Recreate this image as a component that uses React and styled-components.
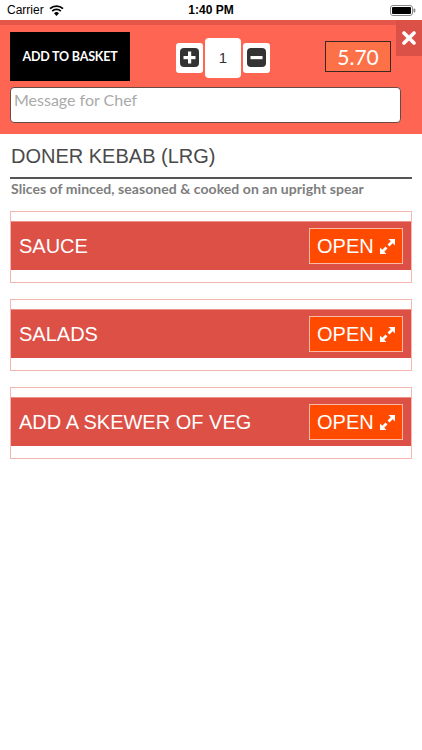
import React, { useState } from "react";
import styled, { createGlobalStyle } from "styled-components";

const GlobalStyle = createGlobalStyle`
  html, body {
    margin: 0;
    padding: 0;
    background: #ffffff;
  }
  * {
    box-sizing: border-box;
  }
`;

const Page = styled.div`
  width: 422px;
  min-height: 750px;
  background: #ffffff;
  font-family: "Liberation Sans", Arial, sans-serif;
`;

const StatusBar = styled.div`
  height: 20px;
  display: flex;
  align-items: center;
  justify-content: space-between;
  padding: 0 6px 0 7px;
  font-family: "Liberation Sans", Arial, sans-serif;
  font-size: 12px;
  color: #000;
  position: relative;
`;

const Carrier = styled.div`
  display: flex;
  align-items: center;
  gap: 5px;
`;

const Clock = styled.div`
  position: absolute;
  left: 0;
  right: 0;
  text-align: center;
  font-weight: bold;
  pointer-events: none;
`;

const Header = styled.div`
  position: relative;
  background: #fe6552;
  border-top: 5px solid #e4564a;
  padding: 7px 21px 11px 10px;
  display: flex;
  flex-direction: column;
  gap: 6px;
`;

const TopRow = styled.div`
  display: flex;
  align-items: center;
  height: 49px;
`;

const BasketButton = styled.button`
  width: 120px;
  height: 49px;
  background: #000;
  color: #fff;
  border: none;
  padding: 0;
  font-family: Lato, "Liberation Sans", sans-serif;
  font-weight: bold;
  font-size: 12.5px;
  letter-spacing: -0.2px;
`;

const Stepper = styled.div`
  display: flex;
  align-items: center;
  gap: 2px;
  margin-left: 46px;
  margin-top: 2px;
`;

const StepButton = styled.button`
  width: 27px;
  height: 30px;
  background: #fff;
  border: none;
  border-radius: 3px;
  padding: 0;
  display: flex;
  align-items: center;
  justify-content: center;
`;

const QtyBox = styled.div`
  width: 36px;
  height: 40px;
  background: #fff;
  border-radius: 4px;
  display: flex;
  align-items: center;
  justify-content: center;
  font-family: "Liberation Sans", Arial, sans-serif;
  font-size: 15px;
  color: #333;
`;

const Price = styled.div`
  margin-left: auto;
  margin-right: 10px;
  width: 66px;
  height: 31px;
  background: #fd7148;
  border: 1px solid #3b2620;
  color: #fff;
  font-family: Lato, "Liberation Sans", sans-serif;
  font-size: 21px;
  display: flex;
  align-items: center;
  justify-content: center;
`;

const CloseButton = styled.button`
  position: absolute;
  top: -5px;
  right: 0;
  width: 26px;
  height: 36px;
  background: #dc5147;
  border: none;
  padding: 0;
  display: flex;
  align-items: center;
  justify-content: center;
`;

const Message = styled.textarea`
  width: 391px;
  height: 36px;
  border: 1px solid #6b4a44;
  border-radius: 4px;
  padding: 2px 3px;
  resize: none;
  font-family: Lato, "Liberation Sans", sans-serif;
  font-size: 16px;
  color: #333;
  background: #fff;
  &::placeholder {
    color: #aaa;
  }
`;

const Body = styled.div`
  padding: 11px 10px 0;
`;

const Title = styled.h1`
  margin: 0;
  padding: 0 0 9px 1px;
  border-bottom: 2px solid #555;
  font-family: "Liberation Sans", Arial, sans-serif;
  font-weight: normal;
  font-size: 20px;
  line-height: 23px;
  color: #4a4a4a;
`;

const Subtitle = styled.p`
  margin: 1px 0 14px;
  padding-left: 1px;
  font-family: Lato, "Liberation Sans", sans-serif;
  font-weight: bold;
  font-size: 14px;
  letter-spacing: 0.05px;
  line-height: 17px;
  color: #7d7d7d;
`;

const Sections = styled.div`
  display: flex;
  flex-direction: column;
  gap: 16px;
`;

const Section = styled.div`
  border: 1px solid #f6b7b1;
  padding: 9px 0 12px;
`;

const Bar = styled.div`
  height: 49px;
  background: #dc5046;
  border-top: 1px solid #eb8f87;
  display: flex;
  align-items: center;
  justify-content: space-between;
  padding: 0 8px 0 8px;
`;

const BarLabel = styled.span`
  color: #fff;
  font-family: "Liberation Sans", Arial, sans-serif;
  font-size: 20px;
`;

const OpenButton = styled.button`
  width: 94px;
  height: 36px;
  background: #ff4a00;
  border: 1px solid #ffb9a8;
  padding: 0 0 0 7px;
  color: #fff;
  font-family: "Liberation Sans", Arial, sans-serif;
  font-size: 20px;
  display: flex;
  align-items: center;
  gap: 5px;
`;

const PlusIcon = () => (
  <svg width="19" height="19" viewBox="0 0 19 19">
    <rect x="0" y="0" width="19" height="19" rx="4" fill="#333" />
    <rect x="8" y="3.5" width="3.2" height="12" fill="#fff" />
    <rect x="3.5" y="8" width="12" height="3.2" fill="#fff" />
  </svg>
);

const MinusIcon = () => (
  <svg width="19" height="19" viewBox="0 0 19 19">
    <rect x="0" y="0" width="19" height="19" rx="4" fill="#333" />
    <rect x="3.5" y="8" width="12" height="3.2" fill="#fff" />
  </svg>
);

const CloseIcon = () => (
  <svg width="14" height="14" viewBox="0 0 14 14">
    <path
      d="M2 2 L12 12 M12 2 L2 12"
      stroke="#fff"
      strokeWidth="3.6"
      strokeLinecap="round"
    />
  </svg>
);

// two outward arrows, as in the old "expand" glyph
const ExpandIcon = () => (
  <svg width="17" height="17" viewBox="0 0 17 17">
    <path d="M9.5 7.5 L13 4" stroke="#fff" strokeWidth="2.6" />
    <polygon points="9.5,1 16,1 16,7.5" fill="#fff" />
    <path d="M7.5 9.5 L4 13" stroke="#fff" strokeWidth="2.6" />
    <polygon points="1,9.5 1,16 7.5,16" fill="#fff" />
  </svg>
);

const WifiIcon = () => (
  <svg width="15" height="11" viewBox="0 0 15 11">
    <path d="M7.5 11 L5 8.2 A3.6 3.6 0 0 1 10 8.2 Z" fill="#000" />
    <path
      d="M3.2 6.2 A6.2 6.2 0 0 1 11.8 6.2"
      stroke="#000"
      strokeWidth="1.8"
      fill="none"
    />
    <path
      d="M1 3.7 A9.3 9.3 0 0 1 14 3.7"
      stroke="#000"
      strokeWidth="1.8"
      fill="none"
    />
  </svg>
);

const BatteryIcon = () => (
  <svg width="26" height="11" viewBox="0 0 26 11">
    <rect x="0.5" y="0.5" width="22" height="10" rx="2.5" fill="none" stroke="#888" />
    <rect x="2" y="2" width="19" height="7" rx="1" fill="#000" />
    <rect x="23.5" y="3.5" width="1.8" height="4" rx="0.8" fill="#888" />
  </svg>
);

const sections = ["SAUCE", "SALADS", "ADD A SKEWER OF VEG"];

const App = () => {
  const [qty, setQty] = useState(1);

  return (
    <Page>
      <GlobalStyle />
      <StatusBar>
        <Carrier>
          Carrier
          <WifiIcon />
        </Carrier>
        <Clock>1:40 PM</Clock>
        <BatteryIcon />
      </StatusBar>
      <Header>
        <TopRow>
          <BasketButton>ADD TO BASKET</BasketButton>
          <Stepper>
            <StepButton onClick={() => setQty(qty + 1)}>
              <PlusIcon />
            </StepButton>
            <QtyBox>{qty}</QtyBox>
            <StepButton onClick={() => setQty(Math.max(1, qty - 1))}>
              <MinusIcon />
            </StepButton>
          </Stepper>
          <Price>{(5.7 * qty).toFixed(2)}</Price>
        </TopRow>
        <Message placeholder="Message for Chef" />
        <CloseButton>
          <CloseIcon />
        </CloseButton>
      </Header>
      <Body>
        <Title>DONER KEBAB (LRG)</Title>
        <Subtitle>Slices of minced, seasoned &amp; cooked on an upright spear</Subtitle>
        <Sections>
          {sections.map((name) => (
            <Section key={name}>
              <Bar>
                <BarLabel>{name}</BarLabel>
                <OpenButton>
                  OPEN
                  <ExpandIcon />
                </OpenButton>
              </Bar>
            </Section>
          ))}
        </Sections>
      </Body>
    </Page>
  );
};

export default App;
